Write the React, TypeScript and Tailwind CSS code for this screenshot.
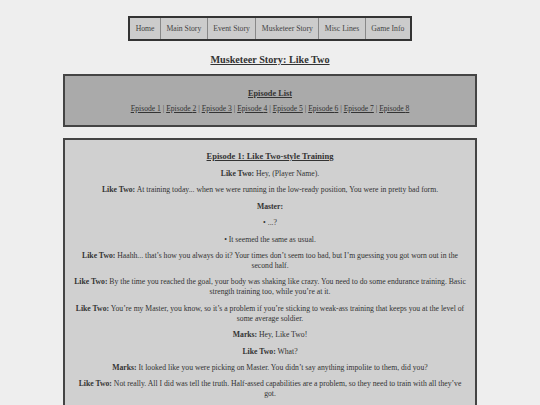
const navItems = ['Home', 'Main Story', 'Event Story', 'Musketeer Story', 'Misc Lines', 'Game Info'];

type Line = { speaker?: string; text: string; bullet?: boolean };

const lines: Line[] = [
  { speaker: 'Like Two', text: 'Hey, (Player Name).' },
  { speaker: 'Like Two', text: 'At training today... when we were running in the low-ready position, You were in pretty bad form.' },
  { speaker: 'Master', text: '' },
  { bullet: true, text: '...?' },
  { bullet: true, text: 'It seemed the same as usual.' },
  { speaker: 'Like Two', text: 'Haahh... that\u2019s how you always do it? Your times don\u2019t seem too bad, but I\u2019m guessing you got worn out in the second half.' },
  { speaker: 'Like Two', text: 'By the time you reached the goal, your body was shaking like crazy. You need to do some endurance training. Basic strength training too, while you\u2019re at it.' },
  { speaker: 'Like Two', text: 'You\u2019re my Master, you know, so it\u2019s a problem if you\u2019re sticking to weak-ass training that keeps you at the level of some average soldier.' },
  { speaker: 'Marks', text: 'Hey, Like Two!' },
  { speaker: 'Like Two', text: 'What?' },
  { speaker: 'Marks', text: 'It looked like you were picking on Master. You didn\u2019t say anything impolite to them, did you?' },
  { speaker: 'Like Two', text: 'Not really. All I did was tell the truth. Half-assed capabilities are a problem, so they need to train with all they\u2019ve got.' },
];

export default function App() {
  return (
    <div className="min-h-[405px] bg-[#eeeeee] text-[#333333] font-['Liberation_Serif',serif] pt-[16px]">
      <div className="flex justify-center">
        <div className="flex border-2 border-[#333333] bg-[#cccccc]">
          {navItems.map((item, i) => (
            <div
              key={item}
              className={`h-[21px] flex items-center px-[5.5px] text-[7.7px] text-[#444444] ${i > 0 ? 'border-l border-[#888888]' : ''}`}
            >
              {item}
            </div>
          ))}
        </div>
      </div>

      <h1 className="text-center text-[10.2px] font-bold underline mt-[12px] leading-[13px]">
        Musketeer Story: Like Two
      </h1>

      <div className="w-[414px] mx-auto mt-[8px] border-2 border-[#444444] bg-[#aaaaaa] pt-[12px] pb-[11px] flex flex-col items-center gap-[5px]">
        <div className="text-[8.3px] font-bold underline leading-[11px]">Episode List</div>
        <div className="text-[7.6px] leading-[10px] text-[#333333]">
          {Array.from({ length: 8 }, (_, i) => (
            <span key={i}>
              {i > 0 && <span className="text-[#444444]"> | </span>}
              <span className="underline">Episode {i + 1}</span>
            </span>
          ))}
        </div>
      </div>

      <div className="w-[414px] mx-auto mt-[11px] border-2 border-[#444444] bg-[#d0d0d0] pt-[11px] pb-[10px] px-[9px]">
        <div className="text-center text-[8.5px] font-bold underline leading-[11px] mb-[7px]">
          Episode 1: Like Two-style Training
        </div>
        {lines.map((l, i) => (
          <p key={i} className="text-center text-[7.7px] leading-[10px] mb-[6.4px]">
            {l.bullet && <span>&bull; </span>}
            {l.speaker && <b>{l.speaker}:</b>}
            {l.text && <span>{l.speaker ? ' ' : ''}{l.text}</span>}
          </p>
        ))}
      </div>
    </div>
  );
}
